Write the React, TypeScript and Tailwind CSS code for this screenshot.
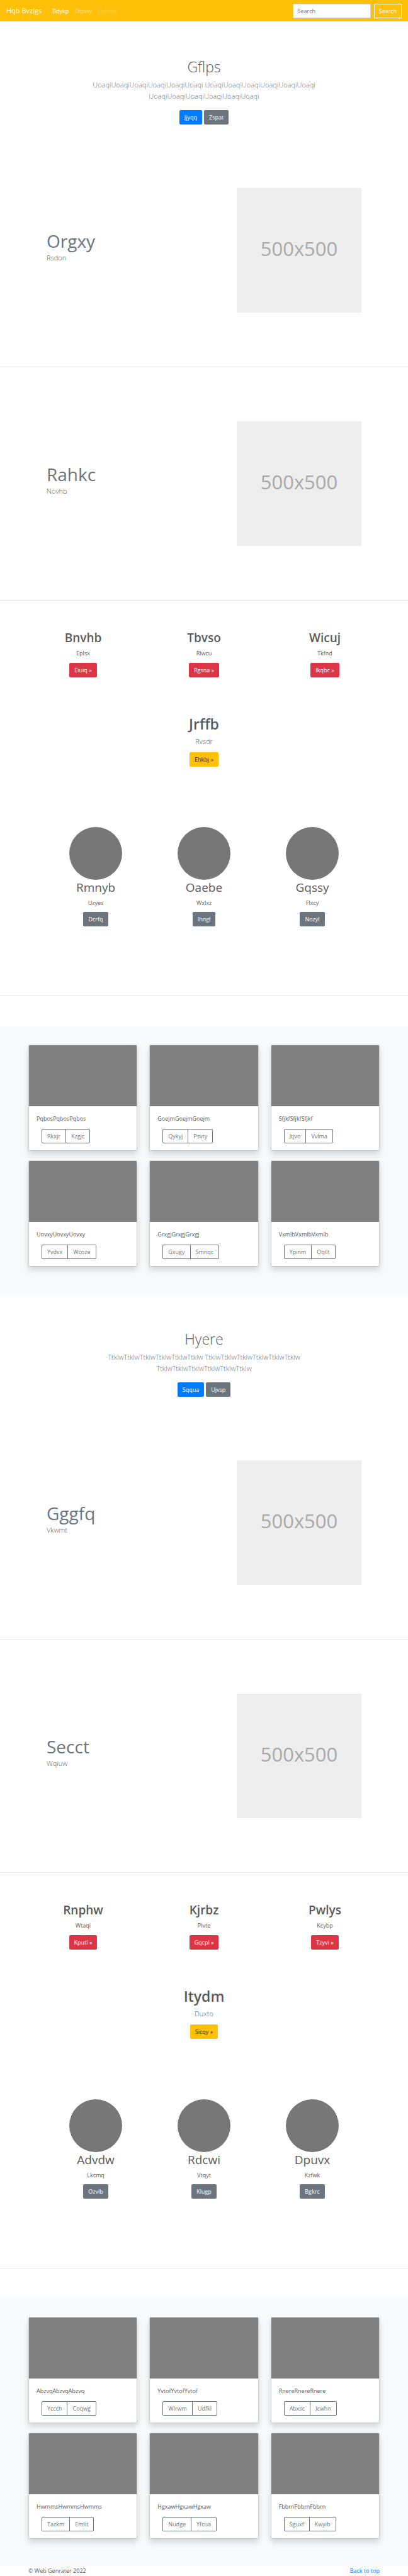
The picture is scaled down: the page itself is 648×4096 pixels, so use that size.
import React from "react";

type Item = { title: string; text: string; button: string };
type Card = { text: string; left: string; right: string };
type BlockData = {
  hero: { title: string; lines: string[]; primary: string; secondary: string };
  features: { title: string; text: string }[];
  offers: Item[];
  callout: Item;
  people: Item[];
  cards: Card[];
};

const repeat = (word: string, times: number) => word.repeat(times);

const blocks: BlockData[] = [
  {
    hero: {
      title: "Gflps",
      lines: [`${repeat("Uoaqi", 6)} ${repeat("Uoaqi", 6)}`, repeat("Uoaqi", 6)],
      primary: "Jjyqq",
      secondary: "Zspat",
    },
    features: [
      { title: "Orgxy", text: "Rsdon" },
      { title: "Rahkc", text: "Novhb" },
    ],
    offers: [
      { title: "Bnvhb", text: "Eplsx", button: "Eiuiq" },
      { title: "Tbvso", text: "Rlwcu", button: "Rgsna" },
      { title: "Wicuj", text: "Tkfnd", button: "Ikqbc" },
    ],
    callout: { title: "Jrffb", text: "Rvsdr", button: "Ehkbj" },
    people: [
      { title: "Rmnyb", text: "Uzyes", button: "Dcrfq" },
      { title: "Oaebe", text: "Wxlxz", button: "Ihngl" },
      { title: "Gqssy", text: "Flxcy", button: "Nozyl" },
    ],
    cards: [
      { text: "Pqbos", left: "Rkxjr", right: "Kzgjc" },
      { text: "Goejm", left: "Qykyj", right: "Psvty" },
      { text: "Sfjkf", left: "Jtjvo", right: "Vvlma" },
      { text: "Uovxy", left: "Yvdvx", right: "Wcoze" },
      { text: "Grxgj", left: "Gxugy", right: "Smnqc" },
      { text: "Vxmlb", left: "Ypinm", right: "Oqllt" },
    ],
  },
  {
    hero: {
      title: "Hyere",
      lines: [`${repeat("Ttklw", 6)} ${repeat("Ttklw", 6)}`, repeat("Ttklw", 6)],
      primary: "Sqqua",
      secondary: "Ujvsp",
    },
    features: [
      { title: "Gggfq", text: "Vkwmt" },
      { title: "Secct", text: "Wqiuw" },
    ],
    offers: [
      { title: "Rnphw", text: "Wtaqi", button: "Kputl" },
      { title: "Kjrbz", text: "Plvte", button: "Gqcpl" },
      { title: "Pwlys", text: "Kcybp", button: "Tzyvi" },
    ],
    callout: { title: "Itydm", text: "Duxto", button: "Sicqy" },
    people: [
      { title: "Advdw", text: "Lkcmq", button: "Ozvlb" },
      { title: "Rdcwi", text: "Vtqyt", button: "Klugp" },
      { title: "Dpuvx", text: "Kzfwk", button: "Bgkrc" },
    ],
    cards: [
      { text: "Abzvq", left: "Yccch", right: "Coqwg" },
      { text: "Yvtof", left: "Wlrwm", right: "Udfkl" },
      { text: "Rnere", left: "Abxsc", right: "Jcwhn" },
      { text: "Hwmms", left: "Tazkm", right: "Emlit" },
      { text: "Hgxaw", left: "Nudge", right: "Yfcua" },
      { text: "Fbbrn", left: "Sguxf", right: "Kwyib" },
    ],
  },
];

const tones = {
  blue: "bg-[#007bff] text-white",
  gray: "bg-[#6c757d] text-white",
  red: "bg-[#dc3545] text-white",
  yellow: "bg-[#ffc107] text-[#212529]",
};

function Button({ tone, children }: { tone: keyof typeof tones; children: React.ReactNode }) {
  return (
    <button type="button" className={`h-[23px] rounded-[2px] px-2 leading-[15px] ${tones[tone]}`}>
      {children}
    </button>
  );
}

function Navbar() {
  return (
    <nav className="flex h-[34px] items-center justify-between bg-[#ffc107] px-[10px]">
      <div className="flex items-center text-white">
        <a href="#top" className="mr-[17px] text-[11px] leading-[18px]">Hqb Bvzlgs</a>
        <div className="flex gap-[10px]">
          <a href="#home">Bdykp</a>
          <a href="#link" className="text-white/50">Dtpwy</a>
          <a href="#disabled" className="text-white/25">Dznww</a>
        </div>
      </div>
      <form className="flex gap-[5px]" onSubmit={(e) => e.preventDefault()}>
        <input
          type="search"
          aria-label="Search"
          placeholder="Search"
          className="h-[23px] w-[124px] rounded-[2px] border border-[#ced4da] bg-white px-[7px] text-[#495057] placeholder:text-[#6c757d]"
        />
        <button type="submit" className="h-[23px] rounded-[2px] border border-white px-[7px] text-white">
          Search
        </button>
      </form>
    </nav>
  );
}

function Hero({ hero }: { hero: BlockData["hero"] }) {
  return (
    <section className="flex flex-col items-center pt-[58px] pb-[15px] text-center">
      <h1 className="mb-[5px] text-[23px] font-light leading-[29px]">{hero.title}</h1>
      <p className="mb-[13px] text-[11px] font-light leading-[18px] text-[#6c757d]">
        {hero.lines[0]}
        <br />
        {hero.lines[1]}
      </p>
      <div className="flex gap-[3px]">
        <Button tone="blue">{hero.primary}</Button>
        <Button tone="gray">{hero.secondary}</Button>
      </div>
    </section>
  );
}

function Feature({ title, text }: { title: string; text: string }) {
  return (
    <section className="flex items-center justify-between border-b border-[#e5e5e5] px-[74px] py-[86px]">
      <div className="pb-3">
        <h2 className="text-[28px] leading-[36px] text-[#6c757d]">{title}</h2>
        <p className="text-[11px] font-light leading-[18px]">{text}</p>
      </div>
      <div
        role="img"
        aria-label="500x500"
        className="flex size-[198px] items-center justify-center bg-[#eeeeee] pb-[6px] text-[31px] text-[#aaaaaa]"
      >
        500x500
      </div>
    </section>
  );
}

function Marketing({ data }: { data: BlockData }) {
  return (
    <section className="border-b border-[#e5e5e5] pt-12 pb-[110px] text-center">
      <div className="grid grid-cols-3 px-9">
        {data.offers.map((o) => (
          <div key={o.title}>
            <h2 className="mb-[5px] text-[19px] font-semibold leading-[23px]">{o.title}</h2>
            <p className="mb-2">{o.text}</p>
            <div className="flex justify-center">
              <Button tone="red">{o.button} »</Button>
            </div>
          </div>
        ))}
      </div>
      <div className="mt-[60px] flex flex-col items-center">
        <h1 className="mb-1 text-[23px] font-semibold leading-[29px]">{data.callout.title}</h1>
        <p className="mb-2 text-[11px] font-light leading-[18px]">{data.callout.text}</p>
        <Button tone="yellow">{data.callout.button} »</Button>
      </div>
      <div className="mt-24 grid grid-cols-3 px-[66px]">
        {data.people.map((p) => (
          <div key={p.title} className="flex flex-col items-center">
            <div className="mb-px size-[84px] rounded-full bg-[#777777]" />
            <h2 className="mb-[5px] text-[19px] leading-[23px]">{p.title}</h2>
            <p className="mb-[7px]">{p.text}</p>
            <Button tone="gray">{p.button}</Button>
          </div>
        ))}
      </div>
    </section>
  );
}

function Album({ cards }: { cards: Card[] }) {
  return (
    <section className="mt-12 grid grid-cols-3 gap-x-[19px] gap-y-[15px] bg-[#f8f9fa] px-[45px] pt-[29px] pb-[43px]">
      {cards.map((c) => (
        <article
          key={c.text}
          className="overflow-hidden rounded-[2px] border border-black/10 bg-white bg-clip-padding shadow-[0_5px_10px_rgba(0,0,0,0.15)]"
        >
          <div className="h-[97px] bg-[#808080]" />
          <div className="px-3 pt-3 pb-[11px]">
            <p className="mb-[9px]">{repeat(c.text, 3)}</p>
            <div className="ml-2 flex text-[#6c757d]">
              <button type="button" className="h-[23px] rounded-l-[2px] border border-[#6c757d] px-2">
                {c.left}
              </button>
              <button type="button" className="-ml-px h-[23px] rounded-r-[2px] border border-[#6c757d] px-2">
                {c.right}
              </button>
            </div>
          </div>
        </article>
      ))}
    </section>
  );
}

export default function App() {
  return (
    <div
      id="top"
      className="bg-white font-['Open_Sans','Noto_Sans',sans-serif] text-[9px] leading-[15px] text-[#5a5a5a]"
    >
      <Navbar />
      <main>
        {blocks.map((b) => (
          <React.Fragment key={b.hero.title}>
            <Hero hero={b.hero} />
            {b.features.map((f) => (
              <Feature key={f.title} title={f.title} text={f.text} />
            ))}
            <Marketing data={b} />
            <Album cards={b.cards} />
          </React.Fragment>
        ))}
      </main>
      <footer className="flex justify-between px-[45px] pb-px">
        <p>© Web Genrater 2022</p>
        <a href="#top" className="text-[#007bff]">Back to top</a>
      </footer>
    </div>
  );
}
